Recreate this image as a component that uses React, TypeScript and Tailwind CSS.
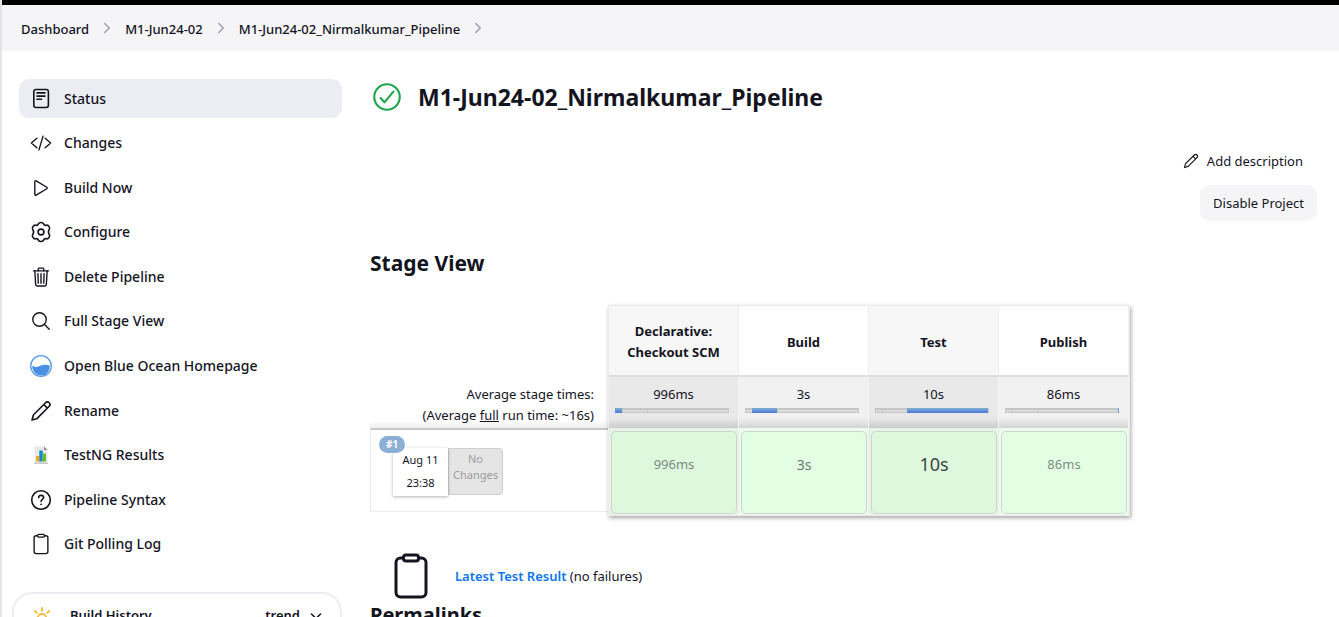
import React from "react";
import {
  IoCheckmarkCircleOutline,
  IoChevronForwardOutline,
  IoClipboardOutline,
  IoCodeSlashOutline,
  IoPlayOutline,
  IoSearchOutline,
  IoTrashOutline,
} from "react-icons/io5";

const ICON = "size-[22px] shrink-0";

function StatusIcon() {
  return (
    <svg viewBox="0 0 22 22" className={ICON} fill="none" stroke="currentColor" strokeWidth="1.6" strokeLinecap="round" strokeLinejoin="round">
      <rect x="3.8" y="1.5" width="14.6" height="18" rx="2.2" />
      <path d="M7 4.9h8M7 8.1h8M7 11.3h4.5" />
    </svg>
  );
}

function GearIcon() {
  return (
    <svg viewBox="0 0 22 22" className={ICON} fill="none" stroke="currentColor" strokeWidth="1.6" strokeLinejoin="round">
      <circle cx="11" cy="11" r="2.9" />
      <path d="M8.6 2.6C9.2 1.2 12.8 1.2 13.4 2.6C14 4 15.2 4.6 16.7 4.2C18.4 3.8 20.4 7 19.3 8.4C18.2 10 18.2 12 19.3 13.6C20.4 15 18.4 18.2 16.7 17.8C15.2 17.4 14 18 13.4 19.4C12.8 20.8 9.2 20.8 8.6 19.4C8 18 6.8 17.4 5.3 17.8C3.6 18.2 1.6 15 2.7 13.6C3.8 12 3.8 10 2.7 8.4C1.6 7 3.6 3.8 5.3 4.2C6.8 4.6 8 4 8.6 2.6Z" />
    </svg>
  );
}

function PencilIcon({ className = ICON }: { className?: string }) {
  return (
    <svg viewBox="0 0 22 22" className={className} fill="none" stroke="currentColor" strokeWidth="1.6" strokeLinecap="round" strokeLinejoin="round">
      <path d="M2 20l1.5-5.3L15.6 2.7c1.1-1 2.6-1 3.6 0s1 2.6 0 3.6L7.2 18.4 2 20zM13.8 4.5l3.6 3.6" />
    </svg>
  );
}

function HelpIcon() {
  return (
    <svg viewBox="0 0 22 22" className={ICON} fill="none" stroke="currentColor" strokeWidth="1.6" strokeLinecap="round">
      <circle cx="11" cy="11" r="9.3" />
      <path d="M8.6 8.6c.1-1.5 1.2-2.2 2.5-2.2 1.4 0 2.5.9 2.5 2.2 0 1.9-2.5 1.9-2.5 3.9" />
      <circle cx="11" cy="15.3" r=".5" fill="currentColor" strokeWidth=".8" />
    </svg>
  );
}

function OceanIcon() {
  return (
    <svg viewBox="0 0 22 22" className={ICON}>
      <circle cx="11" cy="11" r="10.3" fill="#fff" stroke="#5a9be6" strokeWidth="1.3" />
      <path d="M2.2 10.8c2.5 1.4 4.8 1.6 7.3.3 3-1.6 6.500-2 10.300-.6A8.850 8.850 0 1 1 2.200 10.800z" fill="#4a90e2" />
    </svg>
  );
}

function ChartIcon() {
  return (
    <svg viewBox="0 0 22 22" className={ICON}>
      <path d="M4.5 2.5h10l3 3V19h-13z" fill="#e9e9e6" />
      <path d="M14 2.5L17.500 6H14z" fill="#8d8d8d" />
      <path d="M4 18.5h14V20H4z" fill="#c9c9c6" />
      <path d="M6 12h3.5v5.5H6z" fill="#f5a623" />
      <path d="M9.3 6.5h3.4v11H9.3z" fill="#1587cf" />
      <path d="M12.7 9.5H16v8h-3.3z" fill="#6dbb2c" />
    </svg>
  );
}

function SunIcon() {
  return (
    <svg viewBox="0 0 24 24" className="size-6 shrink-0" fill="none" stroke="#fbb434" strokeWidth="1.8" strokeLinecap="round">
      <circle cx="12" cy="12" r="4.2" />
      <path d="M12 1.8v3M12 19.2v3M1.8 12h3M19.2 12h3M4.8 4.8l2 2M17.2 17.2l2 2M4.8 19.2l2-2M17.2 6.8l2-2" />
    </svg>
  );
}

const crumbs = ["Dashboard", "M1-Jun24-02", "M1-Jun24-02_Nirmalkumar_Pipeline"];

const tasks = [
  { label: "Status", icon: <StatusIcon />, active: true },
  { label: "Changes", icon: <IoCodeSlashOutline className={ICON} /> },
  { label: "Build Now", icon: <IoPlayOutline className={ICON} /> },
  { label: "Configure", icon: <GearIcon /> },
  { label: "Delete Pipeline", icon: <IoTrashOutline className={ICON} /> },
  { label: "Full Stage View", icon: <IoSearchOutline className={ICON} /> },
  { label: "Open Blue Ocean Homepage", icon: <OceanIcon /> },
  { label: "Rename", icon: <PencilIcon /> },
  { label: "TestNG Results", icon: <ChartIcon /> },
  { label: "Pipeline Syntax", icon: <HelpIcon /> },
  { label: "Git Polling Log", icon: <IoClipboardOutline className={ICON} /> },
];

const stages = [
  { name: "Declarative: Checkout SCM", time: "996ms", start: 0, end: 7, text: "text-[13px]/[21px] opacity-50" },
  { name: "Build", time: "3s", start: 7, end: 32, text: "text-sm/[21px] opacity-60" },
  { name: "Test", time: "10s", start: 32, end: 113, text: "text-lg/[21px] opacity-80" },
  { name: "Publish", time: "86ms", start: 113, end: 114, text: "text-[13px]/[21px] opacity-50" },
];
const TOTAL = 114;

function StageBar({ start, end }: { start: number; end: number }) {
  return (
    <div className="relative mt-[3px] mr-[9px] ml-1.5 h-[5px] border-t-2 border-b border-[#c4c6c4] bg-[#dcdcdc]">
      {[0, 7, 32, 113].map((tick) => (
        <span key={tick} className="absolute inset-y-0 w-px bg-[#c4c6c4]" style={{ left: `${(tick / TOTAL) * 100}%` }} />
      ))}
      <span
        className="absolute -top-0.5 -bottom-px bg-linear-to-b from-[#86aed0] to-[#4a79d9]"
        style={{ left: `${(start / TOTAL) * 100}%`, width: `${((end - start) / TOTAL) * 100}%` }}
      />
    </div>
  );
}

function StageView() {
  return (
    <div className="relative w-fit">
      <table className="table-fixed border-separate border-spacing-0 text-[13px] leading-[21px]">
        <colgroup>
          <col className="w-[239px]" />
          {stages.map((s) => (
            <col key={s.name} className="w-[130px]" />
          ))}
        </colgroup>
        <thead>
          <tr className="h-[72px]">
            <td />
            {stages.map((s) => (
              <th key={s.name} scope="col" className="border-r border-b-2 border-r-[#eee] border-b-[#dedede] px-3 pt-1 font-bold odd:bg-white even:bg-[#f7f7f7]">
                {s.name}
              </th>
            ))}
          </tr>
        </thead>
        <tbody>
          <tr className="h-[51px] align-top">
            <th scope="row" className="bg-linear-to-b from-white from-85% to-[#eee] pt-[7px] pr-[15px] text-right font-normal whitespace-nowrap">
              Average stage times:
              <br />
              (Average <u>full</u> run time: ~16s)
            </th>
            {stages.map((s) => (
              <td
                key={s.name}
                className="border-r border-r-[#f4f4f4] bg-linear-to-b from-80% p-0 pt-[7px] text-center odd:from-[#f1f1f1] odd:to-[#d4d4d4] even:from-[#e9e9e9] even:to-[#cccccc]"
              >
                {s.time}
                <StageBar start={s.start} end={s.end} />
              </td>
            ))}
          </tr>
          <tr className="align-top">
            <td className="p-0">
              <div className="flex h-[84px] border-t-2 border-b border-l border-t-[#c8c8c8] border-b-[#eee] border-l-[#e6e6e6] pt-[18px] pl-[22px]">
                <div className="relative h-12 w-[55px] bg-white text-center text-[11px] leading-[23px] shadow-[0_1px_3px_rgba(0,0,0,0.3)]">
                  Aug 11
                  <br />
                  23:38
                  <a href="#build-1" className="absolute -top-3 -left-3.5 h-[17px] rounded-full bg-[#8bafd6] px-[7px] text-[10px] leading-[17px] font-bold text-white">
                    #1
                  </a>
                </div>
                <div className="h-[47px] w-[55px] rounded-r-[4px] border border-[#cfcfcf] bg-[#e5e5e5] pt-0.5 text-center text-[11px] leading-4 text-[#9b9b9b]">
                  No Changes
                </div>
              </div>
            </td>
            {stages.map((s) => (
              <td key={s.name} className="group border-r border-r-[#eee] p-0 odd:bg-[#ecfbec] even:bg-[#e6f3e6]">
                <div className="mt-[3px] mr-px mb-0.5 ml-0.5 flex h-[83px] items-start justify-center rounded-[5px] border border-[#cdd6ce] bg-[#e3ffe3] pt-[22px] group-even:bg-[#ddf8dd]">
                  <span className={s.text}>{s.time}</span>
                </div>
              </td>
            ))}
          </tr>
        </tbody>
      </table>
      <div className="pointer-events-none absolute inset-y-0 -right-px left-[238px] border border-[#ececec] shadow-[1px_2px_4px_rgba(0,0,0,0.35)]" />
    </div>
  );
}

export default function App() {
  return (
    <div className="flex h-screen flex-col overflow-hidden border-l-2 border-[#e3e3e6] bg-white font-['Noto_Sans','Open_Sans',sans-serif] text-sm text-[#14141f]">
      <div className="h-[5px] shrink-0 bg-black" />
      <nav aria-label="Breadcrumb" className="flex h-[46px] shrink-0 items-center bg-[#f5f5f7] pt-0.5 pl-[19px] text-[13px] font-medium">
        {crumbs.map((c) => (
          <React.Fragment key={c}>
            <a href="#crumb">{c}</a>
            <IoChevronForwardOutline className="mx-2.5 mb-0.5 size-4 text-[#9d9db0]" />
          </React.Fragment>
        ))}
      </nav>
      <div className="flex">
        <aside className="w-[340px] shrink-0 pt-7">
          <ul className="flex h-[485px] flex-col justify-between pl-[17px]">
            {tasks.map((t) => (
              <li key={t.label}>
                <a
                  href="#task"
                  className={
                    t.active
                      ? "flex h-[39px] items-center gap-3 rounded-[10px] bg-[#ecedf3] pl-[11px] text-sm font-medium"
                      : "flex h-[39px] items-center gap-3 rounded-[10px] pl-[11px] text-sm font-medium"
                  }
                >
                  {t.icon}
                  {t.label}
                </a>
              </li>
            ))}
          </ul>
          <section className="mt-7 ml-2.5 flex h-40 items-start rounded-[20px] border-2 border-[#ecedf3] pt-3 pr-[18px] pl-4 text-[13px] font-semibold">
            <SunIcon />
            <h2 className="ml-4">Build History</h2>
            <a href="#trend" className="ml-auto">trend</a>
            <button type="button" aria-label="Toggle build history" className="ml-2.5 pt-1">
              <svg viewBox="0 0 12 12" className="size-3" fill="none" stroke="currentColor" strokeWidth="1.5" strokeLinecap="round">
                <path d="M1.5 4L6 8.5 10.5 4" />
              </svg>
            </button>
          </section>
        </aside>
        <main className="min-w-0 grow pt-7 pr-[22px] pl-7">
          <h1 className="flex h-9 items-center gap-3.5 text-[23px] font-bold">
            <IoCheckmarkCircleOutline className="size-[34px] text-[#1ea64b]" />
            M1-Jun24-02_Nirmalkumar_Pipeline
          </h1>
          <div className="mt-7 flex flex-col items-end text-[13px]">
            <a href="#description" className="flex h-9 items-center gap-2 pr-3.5">
              <PencilIcon className="size-4" />
              Add description
            </a>
            <button type="button" className="mt-1.5 h-9 rounded-[10px] bg-[#f5f5f7] px-[13px]">
              Disable Project
            </button>
          </div>
          <h2 className="mt-7 mb-[27px] text-[21px] leading-[29px] font-bold">Stage View</h2>
          <StageView />
          <div className="mt-9 flex items-center gap-5 pl-[17px]">
            <IoClipboardOutline className="size-12" />
            <p className="text-[13px]">
              <a href="#tests" className="font-semibold text-[#0b76ef]">Latest Test Result</a> (no failures)
            </p>
          </div>
          <h2 className="text-xl leading-[30px] font-bold">Permalinks</h2>
        </main>
      </div>
    </div>
  );
}
